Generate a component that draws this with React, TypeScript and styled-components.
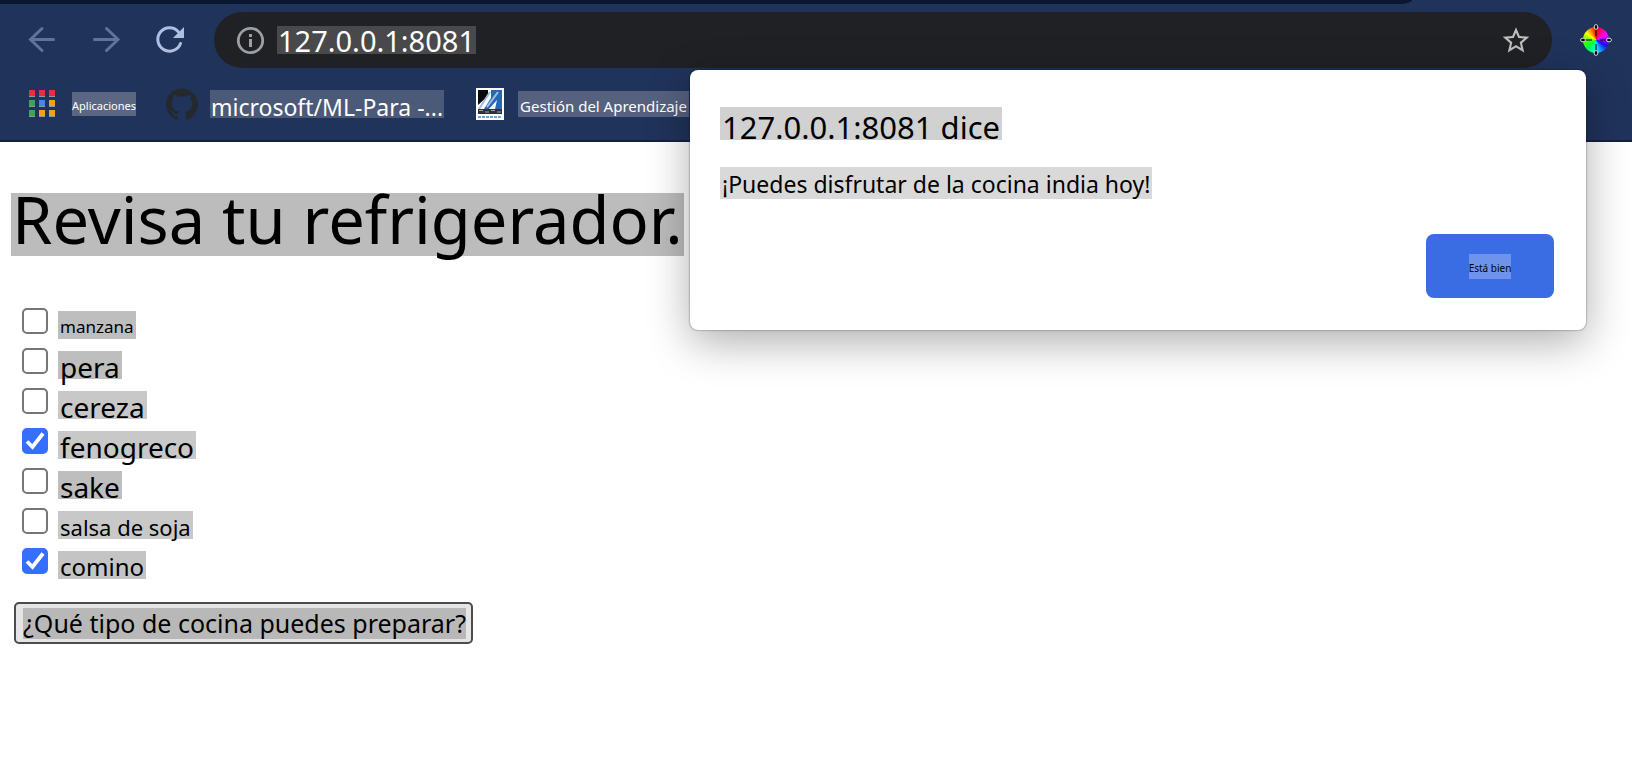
import React from "react";
import styled, { createGlobalStyle } from "styled-components";

const Global = createGlobalStyle`
  * { box-sizing: border-box; }
  body {
    margin: 0;
    background: #fff;
    color: #000;
    font-family: "Noto Sans", "Liberation Sans", sans-serif;
  }
  button, input { font: inherit; }
`;

const Window = styled.div`
  position: relative;
  min-height: 100vh;
  overflow: hidden;
`;

const Mark = styled.span<{ $size: number; $line: number; $tone: string; $top?: number; $bottom?: number; $side?: number }>`
  display: inline-block;
  flex: none;
  padding: ${(p) => p.$top ?? 4}px ${(p) => p.$side ?? 2}px ${(p) => p.$bottom ?? 0}px;
  background: ${(p) => p.$tone};
  font-size: ${(p) => p.$size}px;
  line-height: ${(p) => p.$line}px;
  white-space: nowrap;
`;

const Chrome = styled.header`
  display: flex;
  flex-direction: column;
  background: #20335b;
  border-bottom: 2px solid #15203d;
  color: #fff;
`;

const TabStrip = styled.div`
  height: 4px;
  margin-right: 220px;
  background: #0b1730;
  border-bottom-right-radius: 12px 4px;
`;

const Toolbar = styled.div`
  display: flex;
  align-items: center;
  height: 72px;
  padding: 0 20px 0 26px;
`;

const NavButtons = styled.nav`
  display: flex;
  gap: 32px;
  margin-right: 28px;
`;

const IconButton = styled.button`
  display: flex;
  flex: none;
  align-items: center;
  justify-content: center;
  width: 32px;
  height: 32px;
  padding: 0;
  border: 0;
  background: none;
  color: #60739b;
`;

const AddressBar = styled.div`
  display: flex;
  flex: 1;
  align-items: center;
  height: 56px;
  margin-right: 28px;
  padding: 0 20px;
  border-radius: 28px;
  background: #202124;
`;

const Address = styled.div`
  flex: 1;
  margin-left: 11px;
  line-height: 0;
`;

const Bookmarks = styled.nav`
  display: flex;
  align-items: center;
  height: 64px;
  padding: 0 24px 8px;
`;

const Bookmark = styled.a`
  display: flex;
  flex: none;
  align-items: center;
  gap: 12px;
  margin-right: 32px;
  color: #fff;
  text-decoration: none;
`;

const AppsBookmark = styled(Bookmark)`
  margin-right: 30px;
`;

const CourseBookmark = styled(Bookmark)`
  gap: 14px;
`;

const Page = styled.main`
  padding: 51px 11px 60px;
`;

const Title = styled.h1`
  margin: 0;
  font-weight: 400;
  line-height: 0;
`;

const Ingredients = styled.ul`
  display: flex;
  flex-direction: column;
  margin: 52px 0 0;
  padding: 0 11px;
  list-style: none;
`;

const Ingredient = styled.li`
  height: 40px;
`;

const Choice = styled.label`
  display: inline-flex;
  align-items: flex-start;
  gap: 10px;
`;

const Box = styled.span`
  display: grid;
  width: 26px;
  height: 26px;

  & > * { grid-area: 1 / 1; }
  & > svg { pointer-events: none; }
`;

const Check = styled.input`
  appearance: none;
  width: 26px;
  height: 26px;
  margin: 0;
  border: 2px solid #767676;
  border-radius: 5px;
  background: #fff;

  &:checked {
    border-color: #366fff;
    background: #366fff;
  }
`;

const ChoiceText = styled.span`
  margin-top: 3px;
  line-height: 0;
`;

const Submit = styled.button`
  display: block;
  margin: 14px 3px 0;
  padding: 4px 5px 3px 7px;
  border: 2px solid #4c4c4c;
  border-radius: 5px;
  background: #e5e5e5;
  color: #000;
  line-height: 0;
`;

const Dialog = styled.section`
  position: absolute;
  top: 70px;
  right: 46px;
  width: min(896px, calc(100% - 92px));
  padding: 37px 32px 32px 30px;
  border-radius: 8px;
  background: #fff;
  box-shadow: 0 0 2px rgba(0, 0, 0, 0.6), 0 12px 44px rgba(0, 0, 0, 0.32);
`;

const DialogTitle = styled.h2`
  margin: 0 0 27px;
  font-weight: 400;
  line-height: 0;
`;

const DialogText = styled.p`
  margin: 0;
  line-height: 0;
`;

const DialogActions = styled.div`
  display: flex;
  justify-content: flex-end;
  margin-top: 35px;
`;

const Accept = styled.button`
  width: 128px;
  height: 64px;
  padding: 0;
  border: 0;
  border-radius: 8px;
  background: #3a6de4;
  color: #000;
  line-height: 0;
`;

const Wheel = styled.span`
  display: block;
  width: 26px;
  height: 26px;
  border-radius: 50%;
  background: conic-gradient(#f00, #f0f 17%, #20f 33%, #0ff 50%, #0f4 62%, #5f0 75%, #ff0 85%, #f00);

  & > svg {
    display: block;
    margin: -3px;
  }
`;

const Arrow = ({ flip }: { flip?: boolean }) => (
  <svg width="32" height="32" viewBox="0 0 32 32" fill="none" stroke="currentColor" strokeWidth="3" aria-hidden="true">
    <path
      strokeLinecap="round"
      d={flip ? "M4.500 15.500H27M16.500 4.500 28 15.500 16.500 26.500" : "M27.500 15.500H5M16 4.500 4.500 15.500 16 26.500"}
    />
  </svg>
);

const Reload = () => (
  <svg width="32" height="32" viewBox="0 0 32 32" fill="none" aria-hidden="true">
    <path d="M26.500 19.500A11.700 11.700 0 1 1 24.300 7.700" stroke="#aebfe2" strokeWidth="3" strokeLinecap="round" />
    <path d="M30 3v11H19z" fill="#aebfe2" />
  </svg>
);

const Info = () => (
  <svg width="32" height="32" viewBox="0 0 32 32" aria-hidden="true">
    <circle cx="16.500" cy="16.500" r="12.200" fill="none" stroke="#9aa0a6" strokeWidth="2.800" />
    <path d="M15 10h3v3h-3zM15 15h3v8h-3z" fill="#9aa0a6" />
  </svg>
);

const Star = () => (
  <svg width="35" height="35" viewBox="0 0 24 24" fill="#bdbdbd" aria-hidden="true">
    <path d="M22 9.240l-7.190-.620L12 2 9.190 8.630 2 9.240l5.460 4.730L5.820 21 12 17.270 18.180 21l-1.630-7.030L22 9.240zM12 15.400l-3.760 2.270 1-4.280-3.320-2.880 4.380-.380L12 6.100l1.710 4.040 4.380.380-3.320 2.880 1 4.280L12 15.400z" />
  </svg>
);

const Handles = () => (
  <svg width="32" height="32" viewBox="0 0 32 32" aria-hidden="true">
    <path d="M16 3v9M16 20v9M3 16h9M20 16h9" stroke="#111" strokeOpacity=".75" strokeWidth="1.600" />
    <g fill="#000" stroke="#ddd" strokeWidth="1">
      <ellipse cx="16" cy="3" rx="1.900" ry="2.400" />
      <ellipse cx="16" cy="29" rx="1.900" ry="2.400" />
      <ellipse cx="3" cy="16" rx="2.400" ry="1.900" />
      <ellipse cx="29" cy="16" rx="2.400" ry="1.900" />
    </g>
  </svg>
);

const appColours = ["#ee2c3c", "#ee2c3c", "#ee2c3c", "#3aa757", "#4285f4", "#f0a21a", "#3aa757", "#f0a21a", "#f0a21a"];

const AppsGrid = () => (
  <svg width="36" height="32" viewBox="0 0 36 32" aria-hidden="true">
    {appColours.map((colour, i) => {
      const x = 5 + (i % 3) * 10;
      const y = 2 + Math.floor(i / 3) * 10;
      return (
        <g key={i}>
          <path d={`M${x} ${y}h6v7h-6z`} fill="#8c98a8" />
          <path d={`M${x} ${y}h6v6h-6z`} fill={colour} />
        </g>
      );
    })}
  </svg>
);

const GitHub = () => (
  <svg width="32" height="32" viewBox="0 0 24 24" fill="#24292e" aria-hidden="true">
    <path d="M12 .297c-6.630 0-12 5.373-12 12 0 5.303 3.438 9.800 8.205 11.385.6.113.82-.258.82-.577 0-.285-.01-1.040-.015-2.040-3.338.724-4.042-1.610-4.042-1.610C4.422 18.070 3.633 17.700 3.633 17.700c-1.087-.744.084-.729.084-.729 1.205.084 1.838 1.236 1.838 1.236 1.070 1.835 2.809 1.305 3.495.998.108-.776.417-1.305.76-1.605-2.665-.3-5.466-1.332-5.466-5.930 0-1.310.465-2.380 1.235-3.220-.135-.303-.54-1.523.105-3.176 0 0 1.005-.322 3.300 1.230.96-.267 1.980-.399 3-.405 1.020.006 2.040.138 3 .405 2.280-1.552 3.285-1.230 3.285-1.230.645 1.653.24 2.873.12 3.176.765.84 1.230 1.910 1.230 3.220 0 4.610-2.805 5.625-5.475 5.920.42.36.81 1.096.81 2.220 0 1.606-.015 2.896-.015 3.286 0 .315.21.69.825.57C20.565 22.092 24 17.592 24 12.297c0-6.627-5.373-12-12-12" />
  </svg>
);

const CourseIcon = () => (
  <svg width="28" height="32" viewBox="0 0 28 32" aria-hidden="true">
    <path d="M0 0h28v32H0z" fill="#fff" />
    <path d="M2 2h10v6L2 17z" fill="#0b0b0d" />
    <path d="M15 2h11v19h-7l2-9-8 9H8l7-11z" fill="#2767b5" />
    <path d="M14 4 3 21M22 4 11 19" stroke="#9fbfe2" strokeWidth="2" />
    <path d="M2 21h24v5H2z" fill="#2e3238" />
    <path d="M3 22.500h4M9 24h4M15 22.500h4M21 24h4" stroke="#9aa0a6" />
    <path d="M2 29h24" stroke="#6fa3d8" strokeWidth="2" strokeDasharray="3 1" />
  </svg>
);

const Tick = () => (
  <svg width="26" height="26" viewBox="0 0 26 26" fill="none" stroke="#fff" strokeWidth="3.800" aria-hidden="true">
    <path d="M5 13.500 10.500 19 21 5.500" />
  </svg>
);

const ingredients = [
  { name: "manzana", size: 17, tone: "#bebebe" },
  { name: "pera", size: 28, tone: "#bebebe" },
  { name: "cereza", size: 28, tone: "#c8c8c8" },
  { name: "fenogreco", size: 28, tone: "#c8c8c8", checked: true },
  { name: "sake", size: 28, tone: "#bebebe" },
  { name: "salsa de soja", size: 22, tone: "#c8c8c8" },
  { name: "comino", size: 24, tone: "#c4c4c4", checked: true },
];

export default function App() {
  return (
    <Window>
      <Global />
      <Chrome>
        <TabStrip />
        <Toolbar>
          <NavButtons>
            <IconButton aria-label="Atrás"><Arrow /></IconButton>
            <IconButton aria-label="Adelante"><Arrow flip /></IconButton>
            <IconButton aria-label="Recargar"><Reload /></IconButton>
          </NavButtons>
          <AddressBar>
            <Info />
            <Address>
              <Mark $size={29} $line={26} $top={2} $side={1} $tone="#49494c">127.0.0.1:8081</Mark>
            </Address>
            <IconButton aria-label="Favorito"><Star /></IconButton>
          </AddressBar>
          <IconButton aria-label="Selector de color">
            <Wheel><Handles /></Wheel>
          </IconButton>
        </Toolbar>
        <Bookmarks>
          <AppsBookmark href="#apps">
            <AppsGrid />
            <Mark $size={11} $line={20} $side={0} $tone="#5b6782">Aplicaciones</Mark>
          </AppsBookmark>
          <Bookmark href="#ml">
            <GitHub />
            <Mark $size={23} $line={22} $top={6} $side={1} $tone="#4b5a78">microsoft/ML-Para -...</Mark>
          </Bookmark>
          <CourseBookmark href="#curso">
            <CourseIcon />
            <Mark $size={15} $line={22} $tone="#55617e">Gestión del Aprendizaje</Mark>
          </CourseBookmark>
        </Bookmarks>
      </Chrome>
      <Page>
        <Title>
          <Mark $size={65} $line={53} $top={0} $bottom={10} $side={1} $tone="#bcbcbc">Revisa tu refrigerador.</Mark>
        </Title>
        <Ingredients>
          {ingredients.map((item) => (
            <Ingredient key={item.name}>
              <Choice>
                <Box>
                  <Check type="checkbox" defaultChecked={item.checked} />
                  {item.checked && <Tick />}
                </Box>
                <ChoiceText>
                  <Mark $size={item.size} $line={24} $tone={item.tone}>{item.name}</Mark>
                </ChoiceText>
              </Choice>
            </Ingredient>
          ))}
        </Ingredients>
        <Submit type="button">
          <Mark $size={25} $line={31} $top={0} $side={0} $tone="#b8b8b8">¿Qué tipo de cocina puedes preparar?</Mark>
        </Submit>
      </Page>
      <Dialog role="dialog" aria-labelledby="dialog-title">
        <DialogTitle id="dialog-title">
          <Mark $size={31} $line={25} $top={8} $tone="#d1d1d1">127.0.0.1:8081 dice</Mark>
        </DialogTitle>
        <DialogText>
          <Mark $size={23} $line={30} $top={2} $tone="#d9d9d9">¡Puedes disfrutar de la cocina india hoy!</Mark>
        </DialogText>
        <DialogActions>
          <Accept type="button">
            <Mark $size={10} $line={21} $side={0} $tone="#6e93eb">Está bien</Mark>
          </Accept>
        </DialogActions>
      </Dialog>
    </Window>
  );
}
